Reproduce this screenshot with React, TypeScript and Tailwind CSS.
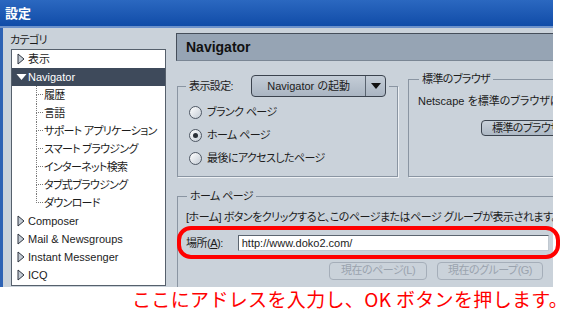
import React from 'react'

function Closed() {
  return (
    <svg width="8" height="12" viewBox="0 0 8 12" className="shrink-0">
      <polygon points="1,1 7,6 1,11" fill="#c3cbd4" stroke="#2e3540" strokeWidth="1" />
    </svg>
  )
}

function Open() {
  return (
    <svg width="11" height="8" viewBox="0 0 11 8" className="shrink-0">
      <polygon points="0.5,1 10.5,1 5.5,7" fill="#ffffff" />
    </svg>
  )
}

function TopItem({ label, open, selected }: { label: string; open?: boolean; selected?: boolean }) {
  return (
    <div className={selected ? 'flex h-[18px] items-center bg-[#3e4a5b] pl-[4px] text-white' : 'flex h-[18px] items-center pl-[5px]'}>
      {open ? <Open /> : <Closed />}
      <span className={open ? 'ml-[1px]' : 'ml-[3px]'}>{label}</span>
    </div>
  )
}

function SubItem({ label, last }: { label: string; last?: boolean }) {
  return (
    <div className="flex h-[18px] items-stretch">
      <div className="ml-[24px] flex w-[7px] shrink-0 flex-col">
        <div className="h-[9px] border-b border-l border-dotted border-[#7a7a7a]" />
        {!last && <div className="flex-1 border-l border-dotted border-[#7a7a7a]" />}
      </div>
      <span className="ml-[1px] whitespace-nowrap leading-[18px] tracking-[-0.7px]">{label}</span>
    </div>
  )
}

function Radio({ label, checked }: { label: string; checked?: boolean }) {
  return (
    <div className="flex h-[23px] items-center">
      <span className="flex h-[13px] w-[13px] shrink-0 items-center justify-center rounded-full border border-[#4f5864] bg-linear-to-br from-[#ffffff] to-[#c4ccd5]">
        {checked && <span className="h-[5px] w-[5px] rounded-full bg-[#2a2f36]" />}
      </span>
      <span className="ml-[5px] tracking-[-0.6px]">{label}</span>
    </div>
  )
}

export default function App() {
  return (
    <div className="relative h-[310px] w-[566px] overflow-hidden bg-white font-['Liberation_Sans','Noto_Sans_CJK_JP',sans-serif] text-[11px] text-[#1c1c1c] [font-feature-settings:'palt']">
      <div className="flex h-[287px] w-[553px] flex-col overflow-hidden">
        {/* title bar */}
        <div className="flex h-[26px] shrink-0 items-center bg-linear-to-b from-[#2b68c0] to-[#104ca8] pl-[5px] font-['Noto_Sans_CJK_JP',sans-serif] text-[13px] font-bold text-white">
          設定
        </div>
        <div className="h-[2px] shrink-0 bg-[#6d92cb]" />

        <div className="flex min-h-0 flex-1 border-l-[3px] border-[#2d62b4] bg-[#cad2da]">
          {/* categories */}
          <div className="flex w-[173px] shrink-0 flex-col pl-[8px]">
            <div className="ml-[-1px] mt-[6px] h-[12px] shrink-0 leading-[12px] tracking-[-0.6px]">カテゴリ</div>
            <div className="mt-[3px] h-[237px] w-[155px] shrink-0 overflow-hidden border border-[#56606c] bg-white">
              <TopItem label="表示" />
              <TopItem label="Navigator" open selected />
              <SubItem label="履歴" />
              <SubItem label="言語" />
              <SubItem label="サポート アプリケーション" />
              <SubItem label="スマート ブラウジング" />
              <SubItem label="インターネット検索" />
              <SubItem label="タブ式ブラウジング" />
              <SubItem label="ダウンロード" last />
              <TopItem label="Composer" />
              <TopItem label="Mail & Newsgroups" />
              <TopItem label="Instant Messenger" />
              <TopItem label="ICQ" />
            </div>
          </div>

          {/* panel */}
          <div className="flex min-w-0 flex-1 flex-col">
            <div className="mt-[5px] flex h-[28px] shrink-0 items-center border-b border-l border-t border-[#454e5a] border-b-[#7a8694] bg-[#96a4b4] pl-[9px] text-[14px] font-bold text-[#111]">
              Navigator
            </div>

            <div className="ml-[1px] mt-[11px] flex shrink-0 items-start gap-[10px]">
              <fieldset className="mt-[3px] w-[221px] shrink-0 border border-[#8a95a2] pb-[6px] pl-[11px] shadow-[1px_1px_0_#eef1f4]">
                <legend className="ml-[-3px] flex items-center px-[3px]">
                  <span className="tracking-[-0.6px]">表示設定:</span>
                  <div className="ml-[18px] flex h-[22px] w-[135px] items-stretch rounded-[4px] border border-[#3b434e] bg-linear-to-b from-[#c4cdd7] to-[#aab5c2]">
                    <div className="flex flex-1 items-center justify-center">Navigator の起動</div>
                    <div className="flex w-[20px] items-center justify-center border-l border-[#59636f]">
                      <svg width="10" height="6" viewBox="0 0 10 6">
                        <polygon points="0,0 10,0 5,6" fill="#111" />
                      </svg>
                    </div>
                  </div>
                </legend>
                <div className="pt-[4px]">
                  <Radio label="ブランク ページ" />
                  <Radio label="ホーム ページ" checked />
                  <Radio label="最後にアクセスしたページ" />
                </div>
              </fieldset>

              <fieldset className="w-[170px] shrink-0 border border-[#8a95a2] pb-[40px] pl-[9px] shadow-[1px_1px_0_#eef1f4]">
                <legend className="ml-[1px] px-[3px] leading-[14px] tracking-[-0.6px]">標準のブラウザ</legend>
                <div className="mt-[8px] whitespace-nowrap leading-[14px]">Netscape を標準のブラウザに設定</div>
                <div className="mt-[12px] flex">
                  <div className="ml-[63px] flex h-[16px] w-[90px] shrink-0 items-center whitespace-nowrap rounded-[4px] border border-[#3b434e] bg-linear-to-b from-[#c9d1da] to-[#adb8c4] pl-[10px] tracking-[-0.6px]">
                    標準のブラウザに
                  </div>
                </div>
              </fieldset>
            </div>

            <fieldset className="ml-[1px] mt-[12px] w-[380px] shrink-0 border border-[#8a95a2] pb-[20px] pl-[8px] shadow-[1px_1px_0_#eef1f4]">
              <legend className="ml-[1px] px-[3px] leading-[14px] tracking-[-0.6px]">ホーム ページ</legend>
              <div className="mt-[7px] whitespace-nowrap leading-[14px] tracking-[-0.5px]">
                [ホーム] ボタンをクリックすると、このページまたはページ グループが表示されます。
              </div>
              <div className="mt-[11px] flex items-center">
                <span className="tracking-[-0.5px]">
                  場所(<span className="underline">A</span>):
                </span>
                <div className="ml-[15px] flex h-[16px] w-[311px] items-center border border-[#5b6570] border-b-[#c0c8d0] border-r-[#c0c8d0] bg-white pl-[3px] text-[11px]">
                  http://www.doko2.com/
                </div>
              </div>
              <div className="ml-[143px] mt-[10px] flex gap-[10px] tracking-[-0.5px] text-[#9aa3ae]">
                <div className="flex h-[18px] w-[98px] items-center justify-center rounded-[4px] border border-[#a5aeb9]">現在のページ(L)</div>
                <div className="flex h-[18px] w-[106px] items-center justify-center rounded-[4px] border border-[#a5aeb9]">現在のグループ(G)</div>
              </div>
            </fieldset>
          </div>
        </div>
      </div>

      <div className="h-[23px] whitespace-nowrap pl-[132px] font-['Noto_Sans_CJK_JP',sans-serif] text-[19px] leading-[23px] tracking-[0.35px] text-[#ff0000] [font-feature-settings:normal]">
        ここにアドレスを入力し、OK ボタンを押します。
      </div>

      <div className="absolute left-[177px] top-[226px] h-[33px] w-[383px] rounded-[14px] border-[4px] border-[#ff0000]" />
    </div>
  )
}
